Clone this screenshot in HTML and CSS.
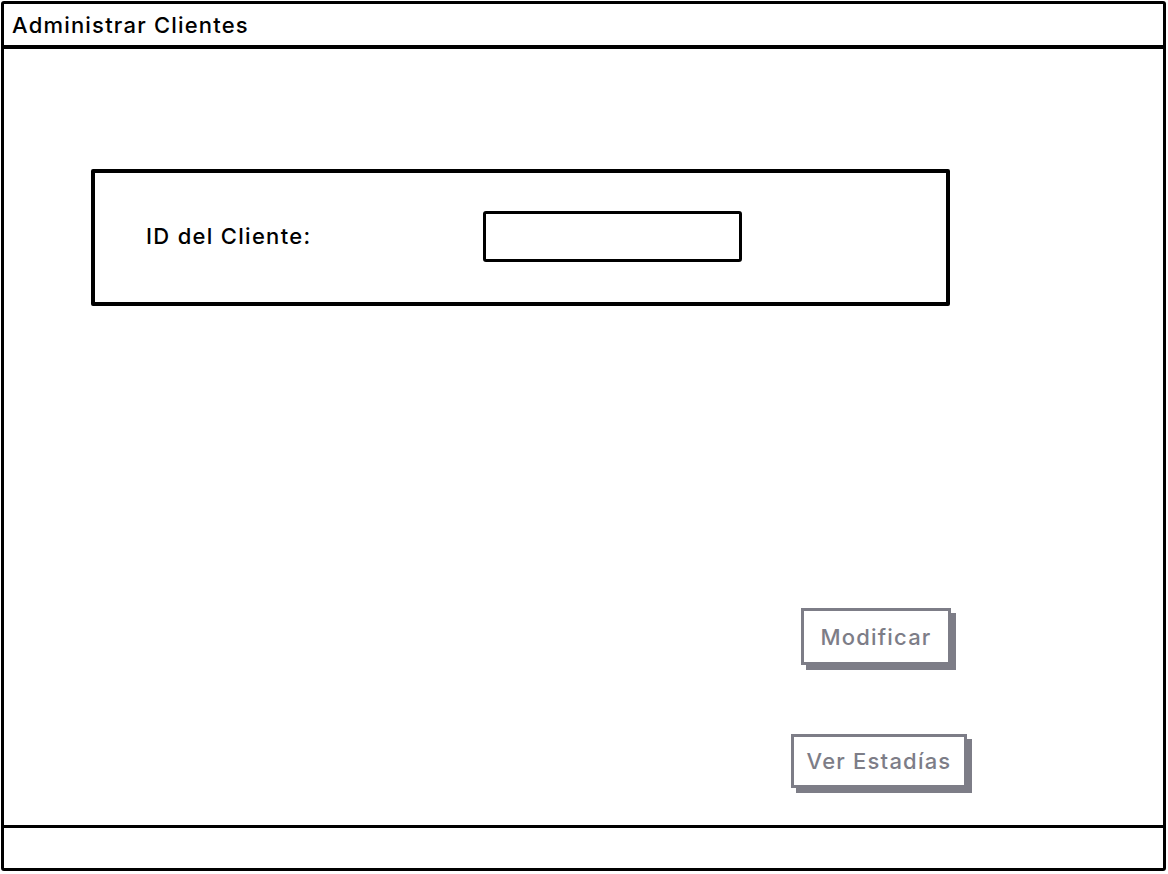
FILE: index.html
```html
<!DOCTYPE html>
<html lang="es">
<head>
<meta charset="utf-8">
<title>Administrar Clientes</title>
<link rel="stylesheet" href="styles.css">
</head>
<body>
<div class="window">
  <div class="titlebar">Administrar Clientes</div>
  <div class="main">
    <div class="formbox">
      <span class="label">ID del Cliente:</span>
      <div class="input"></div>
    </div>
    <div class="actions">
      <div class="btn btn-mod">Modificar</div>
      <div class="btn btn-ver">Ver Estadías</div>
    </div>
  </div>
  <div class="footer"></div>
</div>
</body>
</html>
```
FILE: styles.css
```css
html, body {
  margin: 0;
  padding: 0;
  background: #fff;
}
body {
  font-family: Inter, "Noto Sans", sans-serif;
  font-weight: 500;
  color: #000;
}
.window {
  margin: 1px 2px 3px 1px;
  height: 870px;
  box-sizing: border-box;
  border: 3px solid #000;
  border-radius: 3px;
  display: flex;
  flex-direction: column;
}
.titlebar {
  box-sizing: border-box;
  height: 45px;
  border-bottom: 4px solid #000;
  display: flex;
  align-items: center;
  padding-left: 8px;
  padding-top: 1px;
  font-size: 22px;
  letter-spacing: 1.2px;
}
.main {
  flex: 1;
  display: flex;
  flex-direction: column;
}
.formbox {
  margin: 120px 0 0 87px;
  width: 859px;
  height: 137px;
  box-sizing: border-box;
  border: 4px solid #000;
  border-radius: 2px;
  display: flex;
  align-items: center;
  padding-left: 51px;
  padding-bottom: 4px;
}
.label {
  width: 337px;
  font-size: 22px;
  letter-spacing: 1.3px;
}
.input {
  width: 259px;
  height: 51px;
  box-sizing: border-box;
  border: 3px solid #000;
  border-radius: 3px;
  margin-top: 2px;
}
.actions {
  margin: 302px 0 0 773px;
  width: 208px;
  display: flex;
  flex-direction: column;
  align-items: center;
  gap: 69px;
}
.btn {
  box-sizing: border-box;
  border: 3px solid #7d7d87;
  box-shadow: 5px 5px 0 #7d7d87;
  background: #fff;
  color: #7d7d87;
  font-size: 22px;
  letter-spacing: 1.2px;
  display: flex;
  align-items: center;
  justify-content: center;
}
.btn-mod {
  width: 150px;
  height: 57px;
  margin-left: -10px;
}
.btn-ver {
  width: 176px;
  height: 54px;
  margin-left: -4px;
}
.footer {
  height: 40px;
  border-top: 3px solid #000;
}
```
